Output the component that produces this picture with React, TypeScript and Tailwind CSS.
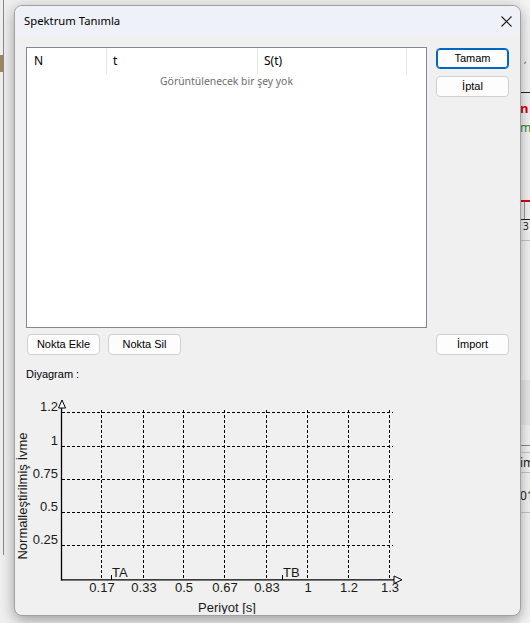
import React from 'react'

const yTicks = [
  { v: '1.2', y: 413 },
  { v: '1', y: 447 },
  { v: '0.75', y: 480 },
  { v: '0.5', y: 513 },
  { v: '0.25', y: 546 },
]

const xTicks = [
  { v: '0.17', x: 101 },
  { v: '0.33', x: 143 },
  { v: '0.5', x: 183 },
  { v: '0.67', x: 224 },
  { v: '0.83', x: 266 },
  { v: '1', x: 307 },
  { v: '1.2', x: 348 },
  { v: '1.3', x: 389 },
]

const Btn: React.FC<{ label: string; focused?: boolean }> = ({ label, focused }) => (
  <button
    className={`h-[21px] w-[73px] rounded-[4px] border bg-[#fdfdfd] text-[11px] leading-none text-black ${
      focused ? 'border-[#0067c0] shadow-[inset_0_0_0_1px_#0067c0]' : 'border-[#d0d0d0]'
    }`}
  >
    {label}
  </button>
)

const Chart: React.FC = () => (
  <svg
    width={400}
    height={230}
    viewBox="14 385 400 230"
    className="block"
    style={{ fontFamily: '"Liberation Sans", Arial, sans-serif' }}
  >
    {/* grid */}
    {yTicks.map((t) => (
      <line key={t.v} x1={62} x2={393} y1={t.y + 0.5} y2={t.y + 0.5} stroke="#000" strokeWidth={1} strokeDasharray="3 2" />
    ))}
    {xTicks.map((t) => (
      <line key={t.v} x1={t.x + 0.5} x2={t.x + 0.5} y1={411} y2={580} stroke="#000" strokeWidth={1} strokeDasharray="3 2" />
    ))}

    {/* axes */}
    <line x1={61.5} x2={61.5} y1={408} y2={581.5} stroke="#000" strokeWidth={1.3} />
    <line x1={61} x2={394} y1={580.8} y2={580.8} stroke="#000" strokeWidth={1.3} />
    <polygon points="62,401 58.5,409 65.5,409" fill="#fff" stroke="#000" strokeWidth={1} />
    <polygon points="394,577 402,580.8 394,584.5" fill="#fff" stroke="#000" strokeWidth={1} />

    {/* y labels */}
    {yTicks.map((t) => (
      <text key={t.v} x={58} y={t.y - 1} fontSize={13} textAnchor="end" fill="#1a1a1a">
        {t.v}
      </text>
    ))}

    {/* x labels */}
    {xTicks.map((t) => (
      <text key={t.v} x={t.x + 1} y={593} fontSize={13} textAnchor="middle" fill="#1a1a1a">
        {t.v}
      </text>
    ))}

    {/* TA / TB markers */}
    <line x1={111.5} x2={111.5} y1={576} y2={581} stroke="#000" strokeWidth={1} />
    <text x={112} y={578} fontSize={13} fill="#1a1a1a">TA</text>
    <line x1={282.5} x2={282.5} y1={576} y2={581} stroke="#000" strokeWidth={1} />
    <text x={283} y={578} fontSize={13} fill="#1a1a1a">TB</text>

    <text x={227} y={613} fontSize={13} textAnchor="middle" fill="#1a1a1a">
      Periyot [s]
    </text>
    <text
      x={0}
      y={0}
      fontSize={13}
      textAnchor="middle"
      fill="#1a1a1a"
      transform="translate(27 497) rotate(-90)"
    >
      Normalleştirilmiş İvme
    </text>
  </svg>
)

// strip of the main application window that shows at the right edge
const BackgroundStrip: React.FC = () => (
  <div className="flex h-full w-[10px] flex-col bg-[#f4f4f4] text-[#222]">
    <div className="h-[55px]" />
    <div className="h-[37px] pl-[4px] text-[9px] leading-[10px] text-[#333]">,</div>
    <div className="h-px bg-[#222]" />
    <div className="h-[9px]" />
    <div className="h-[13px] text-[13px] font-bold leading-[13px] text-[#e00000]">n</div>
    <div className="h-[6px]" />
    <div className="h-[13px] overflow-hidden text-[12px] leading-[13px] text-[#2a8a2a]">m</div>
    <div className="h-[66px]" />
    <div className="h-[2px] bg-[#e00000]" />
    <div className="flex h-[17px] pl-[4px]">
      <div className="w-px bg-[#999]" />
    </div>
    <div className="h-px bg-[#222]" />
    <div className="h-[12px] pl-[3px] text-[10px] leading-[12px]">3</div>
    <div className="h-[8px]" />
    <div className="h-px bg-[#c8c8c8]" />
    <div className="h-[139px]" />
    <div className="h-[45px] bg-[#e8e8e8]" />
    <div className="h-[20px]" />
    <div className="h-px bg-[#888]" />
    <div className="h-[6px]" />
    <div className="h-px bg-[#c8c8c8]" />
    <div className="h-[19px] overflow-hidden text-[12px] leading-[19px]">im</div>
    <div className="h-px bg-[#c8c8c8]" />
    <div className="h-[16px]" />
    <div className="h-[14px] overflow-hidden text-[12px] leading-[14px]">01</div>
    <div className="h-[9px]" />
    <div className="h-px bg-[#c8c8c8]" />
  </div>
)

export default function App() {
  return (
    <div
      className="relative flex h-[623px] w-[530px] overflow-hidden bg-[#efefef]"
      style={{ fontFamily: '"Noto Sans", "Liberation Sans", sans-serif' }}
    >
      {/* background application behind the dialog */}
      <div className="flex w-[520px] shrink-0">
        <div className="flex w-[3px] flex-col">
          <div className="h-[55px]" />
          <div className="h-[17px] bg-[#a08660]" />
        </div>
        <div className="h-[555px] w-px bg-[#8a8a8a]" />
      </div>
      <BackgroundStrip />

      {/* dialog window */}
      <div className="absolute left-[14px] top-[5px] flex h-[611px] w-[507px] flex-col overflow-hidden rounded-[8px] border border-[#a0a0a0] bg-[#f0f0f0] shadow-[0_4px_14px_rgba(0,0,0,0.35)]">
        <div className="flex h-[30px] shrink-0 items-center justify-between bg-[#eef2f8] pl-[9px] pr-[8px]">
          <span className="text-[11.3px] text-black">Spektrum Tanımla</span>
          <svg width="11" height="11" viewBox="0 0 11 11">
            <path d="M0.5 0.5 L10.5 10.5 M10.5 0.5 L0.5 10.5" stroke="#1a1a1a" strokeWidth="1.1" />
          </svg>
        </div>

        <div className="flex flex-col pl-[11px] pt-[11px]">
          <div className="flex gap-[9px]">
            {/* list view */}
            <div className="h-[281px] w-[401px] border border-[#828790] bg-white">
              <div className="flex h-[26px] text-[12px] text-black">
                <div className="flex w-[80px] items-center border-r border-[#e5e5e5] pl-[7px]">N</div>
                <div className="flex w-[151px] items-center border-r border-[#e5e5e5] pl-[6px]">t</div>
                <div className="flex w-[149px] items-center border-r border-[#e5e5e5] pl-[6px]">S(t)</div>
              </div>
              <div className="text-center text-[10.4px] leading-[14px] text-[#6d6d6d]">
                Görüntülenecek bir şey yok
              </div>
            </div>
            {/* right buttons */}
            <div className="flex flex-col gap-[7px] pt-px" style={{ fontFamily: '"Liberation Sans", Arial, sans-serif' }}>
              <Btn label="Tamam" focused />
              <Btn label="İptal" />
            </div>
          </div>

          <div
            className="mt-[6px] flex items-center"
            style={{ fontFamily: '"Liberation Sans", Arial, sans-serif' }}
          >
            <div className="ml-px flex w-[409px] gap-[8px]">
              <Btn label="Nokta Ekle" />
              <Btn label="Nokta Sil" />
            </div>
            <Btn label="İmport" />
          </div>

          <div
            className="mt-[12px] h-[14px] text-[11px] leading-[14px] text-black"
            style={{ fontFamily: '"Liberation Sans", Arial, sans-serif' }}
          >
            Diyagram :
          </div>
        </div>

        <div className="-ml-px mt-[3px]">
          <Chart />
        </div>
      </div>
    </div>
  )
}
